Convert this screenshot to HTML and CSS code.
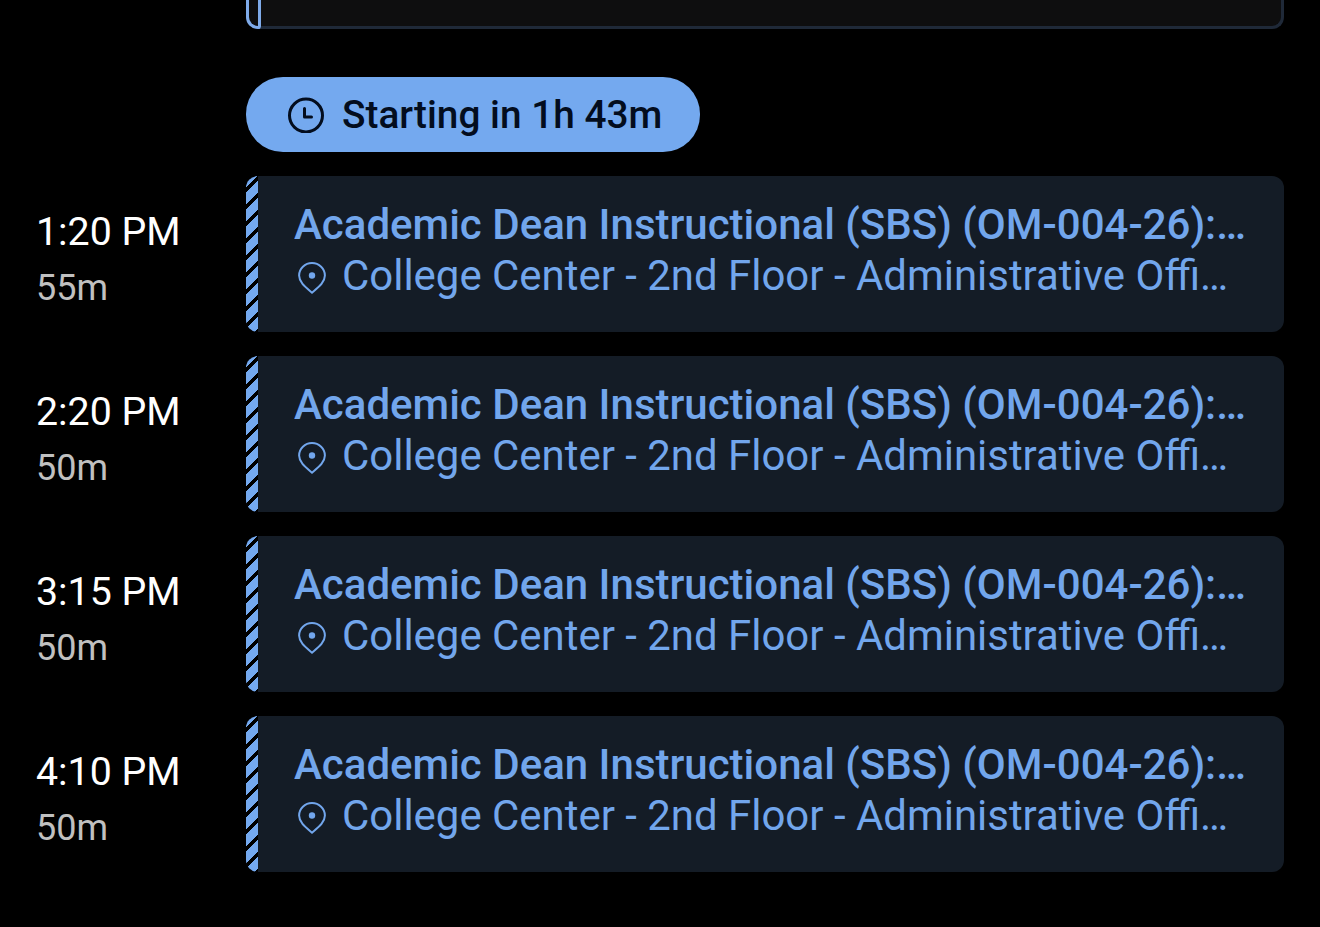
FILE: index.html
```html
<!DOCTYPE html>
<html lang="en">
<head>
<meta charset="utf-8">
<title>Schedule</title>
<link rel="stylesheet" href="styles.css">
</head>
<body>
<main class="schedule">
  <div class="row prev-row">
    <div class="time-col"></div>
    <div class="prev-card"><span class="prev-bar"></span></div>
  </div>
  <div class="row pill-row">
    <div class="time-col"></div>
    <div class="pill">
      <svg class="pill-icon" viewBox="0 0 36 36" fill="none" stroke="#030d1e" stroke-width="3" stroke-linecap="round" stroke-linejoin="round"><circle cx="18" cy="18.500" r="16.500"/><path d="M16.500 11.500v8.500h7"/></svg>
      <span>Starting in 1h 43m</span>
    </div>
  </div>
  <div class="row">
    <div class="time-col"><div class="time">1:20 PM</div><div class="dur">55m</div></div>
    <article class="card">
      <div class="stripe"></div>
      <div class="body">
        <div class="title">Academic Dean Instructional (SBS) (OM-004-26): Academic Dean Instructional</div>
        <div class="loc"><svg class="pin" viewBox="0 0 28 32" fill="none" stroke="#72a6ec" stroke-width="2" stroke-linejoin="round"><path d="M14 30.700C8 25.500 1.100 20.500 1.100 13.500a12.900 12.400 0 0 1 25.800 0C26.900 20.500 20 25.500 14 30.700z"/><circle cx="14" cy="13.500" r="3.200" fill="#72a6ec" stroke="none"/></svg><span class="loc-text">College Center - 2nd Floor - Administrative Offices Room</span></div>
      </div>
    </article>
  </div>
  <div class="row">
    <div class="time-col"><div class="time">2:20 PM</div><div class="dur">50m</div></div>
    <article class="card">
      <div class="stripe"></div>
      <div class="body">
        <div class="title">Academic Dean Instructional (SBS) (OM-004-26): Academic Dean Instructional</div>
        <div class="loc"><svg class="pin" viewBox="0 0 28 32" fill="none" stroke="#72a6ec" stroke-width="2" stroke-linejoin="round"><path d="M14 30.700C8 25.500 1.100 20.500 1.100 13.500a12.900 12.400 0 0 1 25.800 0C26.900 20.500 20 25.500 14 30.700z"/><circle cx="14" cy="13.500" r="3.200" fill="#72a6ec" stroke="none"/></svg><span class="loc-text">College Center - 2nd Floor - Administrative Offices Room</span></div>
      </div>
    </article>
  </div>
  <div class="row">
    <div class="time-col"><div class="time">3:15 PM</div><div class="dur">50m</div></div>
    <article class="card">
      <div class="stripe"></div>
      <div class="body">
        <div class="title">Academic Dean Instructional (SBS) (OM-004-26): Academic Dean Instructional</div>
        <div class="loc"><svg class="pin" viewBox="0 0 28 32" fill="none" stroke="#72a6ec" stroke-width="2" stroke-linejoin="round"><path d="M14 30.700C8 25.500 1.100 20.500 1.100 13.500a12.900 12.400 0 0 1 25.800 0C26.900 20.500 20 25.500 14 30.700z"/><circle cx="14" cy="13.500" r="3.200" fill="#72a6ec" stroke="none"/></svg><span class="loc-text">College Center - 2nd Floor - Administrative Offices Room</span></div>
      </div>
    </article>
  </div>
  <div class="row">
    <div class="time-col"><div class="time">4:10 PM</div><div class="dur">50m</div></div>
    <article class="card">
      <div class="stripe"></div>
      <div class="body">
        <div class="title">Academic Dean Instructional (SBS) (OM-004-26): Academic Dean Instructional</div>
        <div class="loc"><svg class="pin" viewBox="0 0 28 32" fill="none" stroke="#72a6ec" stroke-width="2" stroke-linejoin="round"><path d="M14 30.700C8 25.500 1.100 20.500 1.100 13.500a12.900 12.400 0 0 1 25.800 0C26.900 20.500 20 25.500 14 30.700z"/><circle cx="14" cy="13.500" r="3.200" fill="#72a6ec" stroke="none"/></svg><span class="loc-text">College Center - 2nd Floor - Administrative Offices Room</span></div>
      </div>
    </article>
  </div>
</main>
</body>
</html>
```

FILE: styles.css
```css
* { box-sizing: border-box; }
html, body { margin: 0; height: 100%; background: #000; overflow: hidden; }
body { font-family: Roboto, "Noto Sans", sans-serif; }
.schedule { width: 1320px; height: 927px; padding-right: 36px; display: flex; flex-direction: column; gap: 24px; }
.row { display: flex; }
.time-col { width: 246px; flex: none; padding: 33px 0 0 36px; }
.prev-row { height: 29px; margin-bottom: 24px; }
.prev-row .time-col, .pill-row .time-col { padding: 0; }
.prev-card { flex: 1; height: 29px; background: #0e0e0f; border: 3px solid #1f2938; border-top: 0; border-radius: 0 0 12px 12px; position: relative; }
.prev-bar { position: absolute; left: -3px; top: 0; bottom: -3px; width: 15px; border: 3px solid #7fabea; border-top: 0; border-radius: 0 0 3px 12px; background: #0e0e0f; }
.pill { width: 454px; height: 75px; border-radius: 37px; background: #74a9ef; color: #030d1e; display: flex; align-items: center; padding-left: 42px; gap: 18px; font-size: 38.800px; font-weight: 500; }
.pill-icon { width: 36px; height: 36px; flex: none; }
.time { color: #fff; font-size: 39.300px; font-weight: 400; line-height: 47px; }
.dur { color: #c0c0c0; font-size: 36px; line-height: 42px; margin-top: 11px; }
.card { flex: 1; height: 156px; background: #141c26; border-radius: 12px; display: flex; overflow: hidden; min-width: 0; }
.stripe { width: 12px; flex: none; background: repeating-linear-gradient(135deg, #74a9ef 0 8px, #000 8px 12px); }
.body { flex: 1; min-width: 0; padding: 24px 36px 0 36px; color: #72a6ec; }
.title { font-size: 42px; font-weight: 500; line-height: 49px; white-space: nowrap; overflow: hidden; text-overflow: ellipsis; }
.loc { display: flex; align-items: center; gap: 16px; height: 48px; margin-top: 3px; padding: 0 19px 0 4px; }
.pin { width: 28px; height: 32px; flex: none; margin-top: 4px; }
.loc-text { font-size: 41.950px; line-height: 48px; white-space: nowrap; overflow: hidden; text-overflow: ellipsis; min-width: 0; }
```
